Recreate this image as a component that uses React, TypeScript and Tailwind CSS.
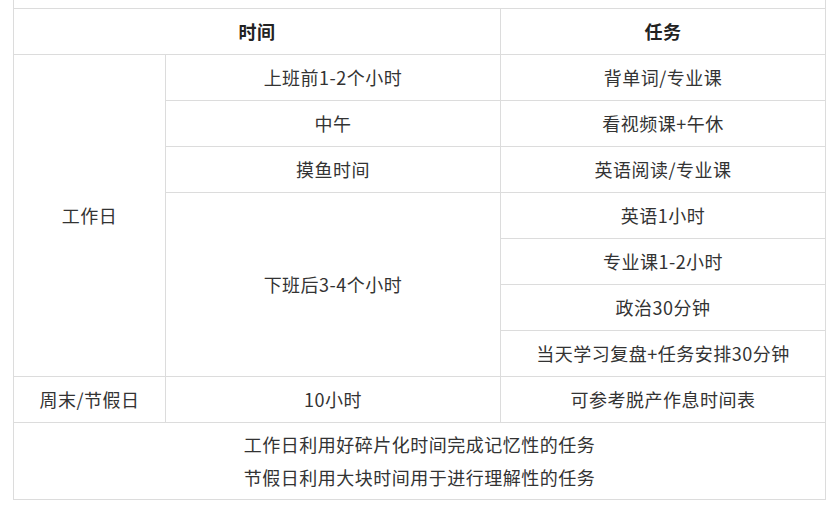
const cell =
  "border border-[#dcdcdc] text-center align-middle p-0 leading-[45px] h-[46px]";

const tasks = [
  "英语1小时",
  "专业课1-2小时",
  "政治30分钟",
  "当天学习复盘+任务安排30分钟",
];

export default function App() {
  return (
    <div
      className="bg-white min-h-screen pl-[13px] pr-[10px] text-[18px] tracking-[0.5px] text-[#333]"
      style={{ fontFamily: '"Noto Sans CJK SC", "Microsoft YaHei", sans-serif' }}
    >
      <table className="w-[812px] border-collapse table-fixed">
        <colgroup>
          <col className="w-[152px]" />
          <col className="w-[335px]" />
          <col className="w-[325px]" />
        </colgroup>
        <tbody>
          <tr>
            <td
              colSpan={3}
              className="border-x border-b border-t-0 border-[#dcdcdc] h-[8px] p-0"
            />
          </tr>
          <tr>
            <td colSpan={2} className={`${cell} font-bold text-[#222]`}>
              时间
            </td>
            <td className={`${cell} font-bold text-[#222]`}>任务</td>
          </tr>
          <tr>
            <td rowSpan={7} className={cell}>
              工作日
            </td>
            <td className={cell}>上班前1-2个小时</td>
            <td className={cell}>背单词/专业课</td>
          </tr>
          <tr>
            <td className={cell}>中午</td>
            <td className={cell}>看视频课+午休</td>
          </tr>
          <tr>
            <td className={cell}>摸鱼时间</td>
            <td className={cell}>英语阅读/专业课</td>
          </tr>
          <tr>
            <td rowSpan={4} className={cell}>
              下班后3-4个小时
            </td>
            <td className={cell}>{tasks[0]}</td>
          </tr>
          {tasks.slice(1).map((t) => (
            <tr key={t}>
              <td className={cell}>{t}</td>
            </tr>
          ))}
          <tr>
            <td className={cell}>周末/节假日</td>
            <td className={cell}>10小时</td>
            <td className={cell}>可参考脱产作息时间表</td>
          </tr>
          <tr>
            <td
              colSpan={3}
              className="border border-[#dcdcdc] text-center h-[77px] p-0 leading-[33px]"
            >
              <div>工作日利用好碎片化时间完成记忆性的任务</div>
              <div>节假日利用大块时间用于进行理解性的任务</div>
            </td>
          </tr>
        </tbody>
      </table>
    </div>
  );
}
